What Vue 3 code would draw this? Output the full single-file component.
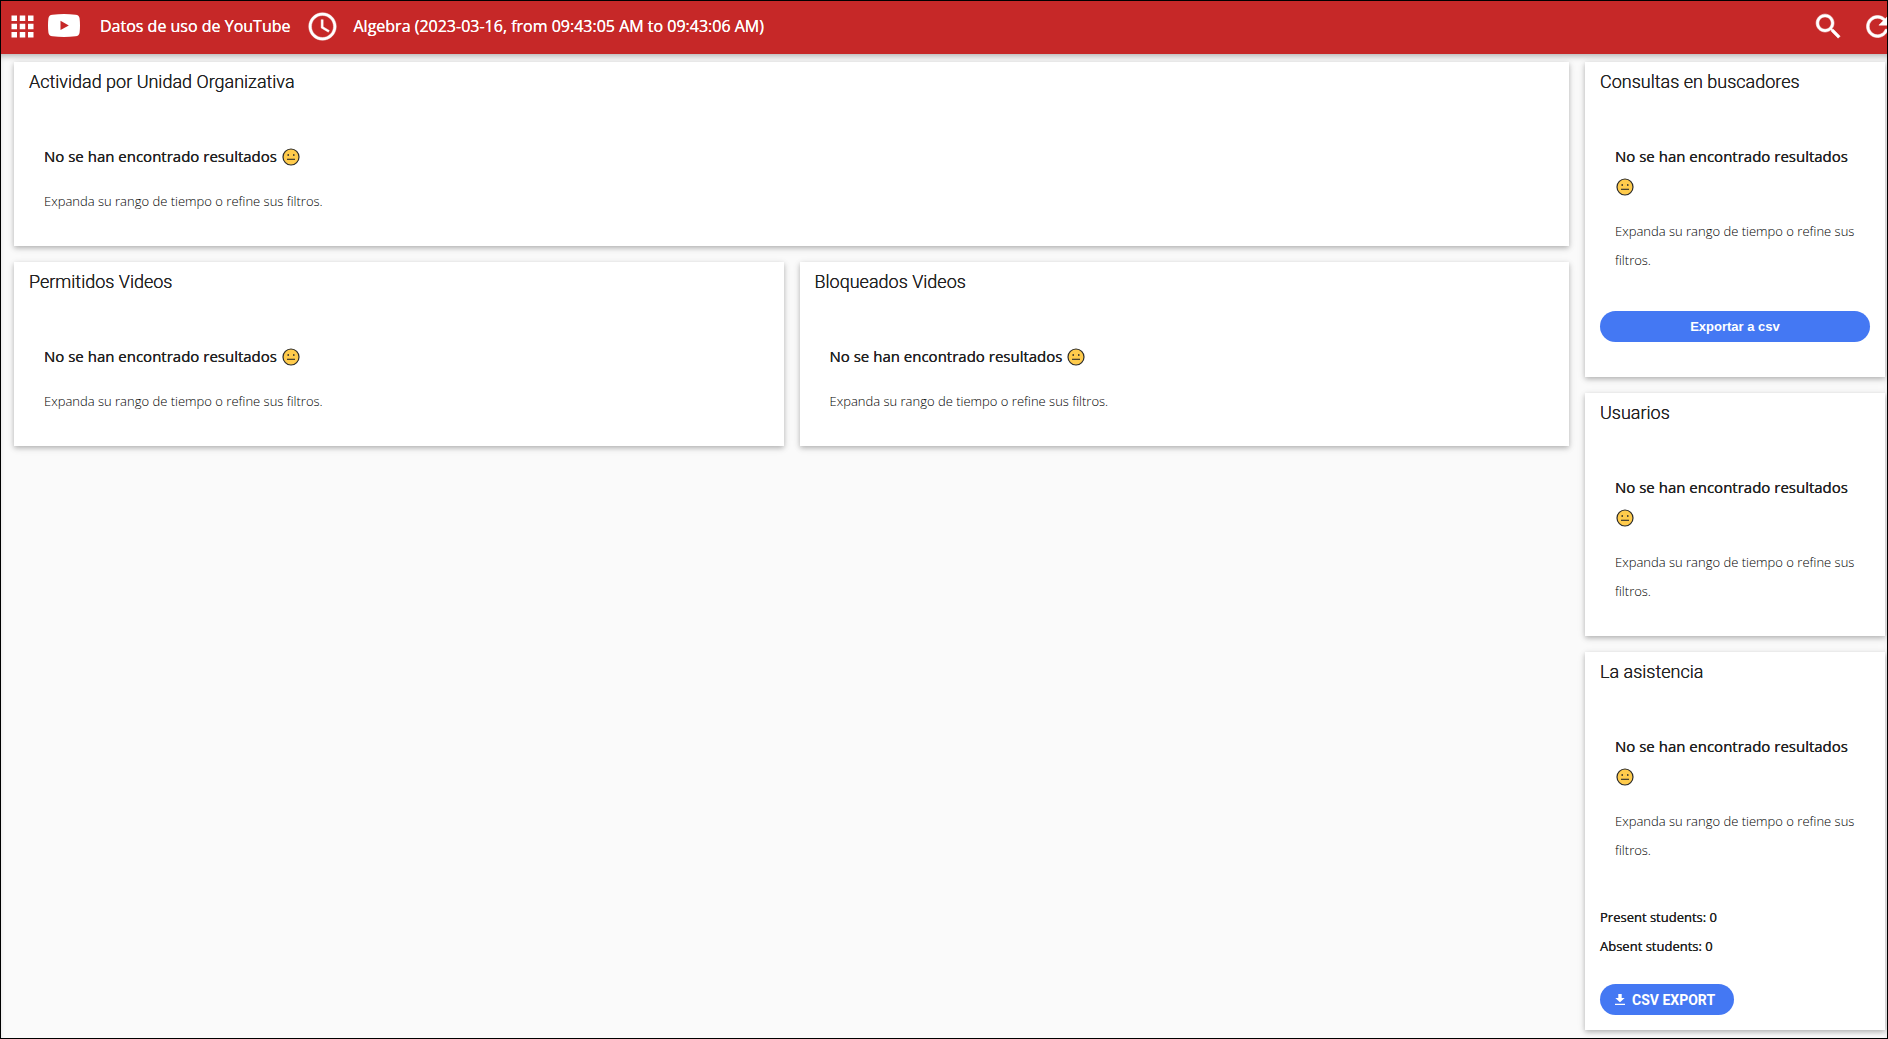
<script setup>
import { h } from 'vue'

const mainCards = [
  { title: 'Actividad por Unidad Organizativa', wide: true },
  { title: 'Permitidos Videos' },
  { title: 'Bloqueados Videos' },
]
const sideCards = [
  { id: 'search', title: 'Consultas en buscadores' },
  { id: 'users', title: 'Usuarios' },
  { id: 'attendance', title: 'La asistencia' },
]

const NeutralFace = () =>
  h('svg', { viewBox: '0 0 18 18', width: 18, height: 18, role: 'img', 'aria-label': 'neutral face' }, [
    h('circle', { cx: 9, cy: 9, r: 8, fill: '#ffcb4c', stroke: '#2b2b2b', 'stroke-width': 1.2 }),
    h('ellipse', { cx: 6.2, cy: 7, rx: 0.8, ry: 1.1, fill: '#2b2b2b' }),
    h('ellipse', { cx: 11.8, cy: 7, rx: 0.8, ry: 1.1, fill: '#2b2b2b' }),
    h('path', { d: 'M5 11.3h8', stroke: '#2b2b2b', 'stroke-width': 1.1 }),
  ])

const EmptyState = () =>
  h('div', { class: 'empty' }, [
    h('p', { class: 'empty-title' }, ['No se han encontrado resultados ', h(NeutralFace)]),
    h('p', { class: 'empty-hint' }, 'Expanda su rango de tiempo o refine sus filtros.'),
  ])
</script>

<template>
  <div class="page">
    <header class="bar">
      <button class="icon-btn" aria-label="Menu">
        <svg viewBox="0 0 24 24" width="33" height="33"><path fill="#fff" d="M4 8h4V4H4v4zm6 12h4v-4h-4v4zm-6 0h4v-4H4v4zm0-6h4v-4H4v4zm6 0h4v-4h-4v4zm6-10v4h4V4h-4zm-6 4h4V4h-4v4zm6 6h4v-4h-4v4zm0 6h4v-4h-4v4z" /></svg>
      </button>
      <svg class="logo" viewBox="0 0 32 23" width="32" height="23">
        <path fill="#fff" d="M4.500 .7Q16-.5 27.500 .7Q31.200 1 31.600 4.500Q32.400 11.500 31.600 18.500Q31.200 22 27.500 22.300Q16 23.500 4.500 22.300Q.8 22 .4 18.500Q-.4 11.500 .4 4.500Q.8 1 4.500 .7z" />
        <path fill="#c62828" d="M12.500 6.700v9.400l8.300-4.700z" />
      </svg>
      <h1 class="bar-text">Datos de uso de YouTube</h1>
      <svg class="clock" viewBox="0 0 24 24" width="33" height="33"><path fill="#fff" stroke="#fff" stroke-width=".3" d="M11.990 2C6.470 2 2 6.480 2 12s4.470 10 9.990 10C17.520 22 22 17.520 22 12S17.520 2 11.990 2zM12 20c-4.420 0-8-3.580-8-8s3.580-8 8-8 8 3.580 8 8-3.580 8-8 8zm.5-13H11v6l5.250 3.150.75-1.230-4.500-2.670z" /></svg>
      <span class="bar-text">Algebra (2023-03-16, from 09:43:05 AM to 09:43:06 AM)</span>
      <div class="actions">
        <button class="icon-btn" aria-label="Buscar">
          <svg viewBox="0 0 24 24" width="33" height="33"><path fill="#fff" stroke="#fff" stroke-width=".4" d="M15.500 14h-.79l-.28-.27C15.410 12.590 16 11.110 16 9.500 16 5.910 13.090 3 9.500 3S3 5.910 3 9.500 5.910 16 9.500 16c1.610 0 3.090-.59 4.230-1.570l.27.28v.79l5 4.990L20.490 19l-4.990-5zm-6 0C7.010 14 5 11.990 5 9.500S7.010 5 9.500 5 14 7.010 14 9.500 11.990 14 9.500 14z" /></svg>
        </button>
        <button class="icon-btn" aria-label="Actualizar">
          <svg viewBox="0 0 24 24" width="33" height="33"><path fill="#fff" stroke="#fff" stroke-width=".4" d="M17.650 6.350C16.200 4.900 14.210 4 12 4c-4.420 0-7.990 3.580-7.990 8s3.570 8 7.990 8c3.730 0 6.840-2.550 7.730-6h-2.080c-.82 2.330-3.040 4-5.650 4-3.310 0-6-2.690-6-6s2.690-6 6-6c1.660 0 3.140.69 4.220 1.780L13 11h7V4l-2.350 2.350z" /></svg>
        </button>
      </div>
    </header>

    <div class="content">
      <main class="main">
        <section v-for="card in mainCards" :key="card.title" class="card" :class="{ wide: card.wide }">
          <h2>{{ card.title }}</h2>
          <EmptyState />
        </section>
      </main>
      <aside class="side">
        <section v-for="card in sideCards" :key="card.id" class="card">
          <h2>{{ card.title }}</h2>
          <EmptyState />
          <button v-if="card.id === 'search'" class="pill full">Exportar a csv</button>
          <template v-if="card.id === 'attendance'">
            <div class="stats">
              <p>Present students: 0</p>
              <p>Absent students: 0</p>
            </div>
            <button class="pill export">
              <svg viewBox="0 0 10 11" width="10" height="11"><path fill="#fff" d="M3.300 0h3.400v4H9.700L5 8.300.3 4h3zM0 9.800h10V11H0z" /></svg>
              CSV EXPORT
            </button>
          </template>
        </section>
      </aside>
    </div>
  </div>
</template>

<style>
body {
  margin: 0;
}
</style>

<style scoped>
.page {
  box-sizing: border-box;
  min-height: 100vh;
  border: 1px solid #000;
  background: #fafafa;
  color: #212121;
  font-family: "Open Sans", sans-serif;
}
h1,
h2,
p {
  margin: 0;
}
.bar {
  display: flex;
  align-items: center;
  height: 53px;
  box-sizing: border-box;
  padding: 0 0 3px 5px;
  overflow: hidden;
  background: #c62828;
}
.icon-btn {
  display: block;
  flex: none;
  padding: 0;
  border: 0;
  background: none;
  cursor: pointer;
}
.icon-btn svg,
.logo,
.clock {
  display: block;
  flex: none;
}
.logo {
  margin: 0 20px 2px 9px;
}
.clock {
  margin: 0 14px 0 16px;
}
.bar-text {
  color: #fff;
  font-size: 16px;
  font-weight: 500;
  line-height: 24px;
  text-shadow: 0 0 0 currentColor;
  white-space: nowrap;
}
.actions {
  display: flex;
  gap: 16px;
  margin: 0 -7px 0 auto;
}
.content {
  display: flex;
  align-items: flex-start;
  gap: 16px;
  padding: 8px 2px 8px 13px;
  box-shadow: inset 0 5px 6px -3px rgba(0, 0, 0, 0.3);
}
.main {
  display: grid;
  flex: 1;
  grid-template-columns: 1fr 1fr;
  gap: 16px;
}
.wide {
  grid-column: 1 / -1;
}
.side {
  display: flex;
  flex: none;
  flex-direction: column;
  gap: 16px;
  width: 300px;
}
.card {
  box-sizing: border-box;
  padding: 0 15px;
  background: #fff;
  box-shadow: 0 2px 5px rgba(0, 0, 0, 0.26), 0 2px 10px rgba(0, 0, 0, 0.06);
}
.card h2 {
  font-family: Roboto, sans-serif;
  font-size: 18px;
  font-weight: 300;
  line-height: 40px;
  text-shadow: 0 0 0 currentColor;
}
.card :deep(.empty) {
  padding: 39px 0 30px 15px;
}
.card :deep(.empty-title) {
  margin: 0 0 16px;
  font-size: 15px;
  font-weight: 500;
  line-height: 30px;
  text-shadow: 0 0 0 currentColor;
}
.card :deep(.empty-title svg) {
  margin: 0 1px;
  vertical-align: -4px;
}
.card :deep(.empty-hint) {
  margin: 0;
  color: #000;
  font-size: 13px;
  font-weight: 300;
  line-height: 29px;
}
.pill {
  display: flex;
  align-items: center;
  justify-content: center;
  height: 31px;
  padding: 0 15px;
  border: 0;
  border-radius: 16px;
  background: #4478f3;
  color: #fff;
  font-family: "Liberation Sans", Arial, sans-serif;
  font-size: 13px;
  font-weight: 700;
  cursor: pointer;
}
.full {
  width: 100%;
  margin: 6px 0 35px;
}
.stats {
  margin: 8px 0 23px;
  font-size: 13px;
  font-weight: 500;
  line-height: 29px;
  text-shadow: 0 0 0 currentColor;
}
.export {
  gap: 7px;
  justify-content: flex-start;
  min-width: 134px;
  margin-bottom: 15px;
  font-family: Roboto, sans-serif;
  font-size: 14px;
}
</style>
